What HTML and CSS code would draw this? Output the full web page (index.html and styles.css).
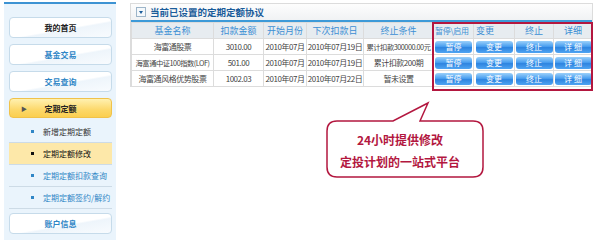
FILE: index.html
```html
<!DOCTYPE html>
<html lang="zh-CN">
<head>
    <meta charset="UTF-8">
    <title>定期定额修改</title>
    <link rel="stylesheet" href="styles.css">
</head>
<body>

    <!-- Menu lateral -->
    <div class="lateral">
        <div class="menu-botao preto">我的首页</div>
        <div class="menu-botao">基金交易</div>
        <div class="menu-botao">交易查询</div>
        <div class="menu-botao ativo"><span class="seta">&#9654;</span>定期定额</div>
        <ul class="submenu">
            <li class="cinza">新增定期定额</li>
            <li class="atual">定期定额修改</li>
            <li>定期定额扣款查询</li>
            <li>定期定额签约/解约</li>
        </ul>
        <div class="menu-botao">账户信息</div>
    </div>

    <!-- Conteúdo principal -->
    <div class="principal">
        <div class="painel">
            <div class="painel-titulo"><span class="icone-seta"></span>当前已设置的定期定额协议</div>
            <div class="tabela-area">
                <table class="tabela">
                    <colgroup>
                        <col style="width:82px"><col style="width:50px"><col style="width:43px">
                        <col style="width:57px"><col style="width:70px"><col style="width:40px">
                        <col style="width:41px"><col style="width:39px"><col style="width:39px">
                    </colgroup>
                    <tr>
                        <th>基金名称</th><th>扣款金额</th><th>开始月份</th><th>下次扣款日</th><th>终止条件</th>
                        <th class="esq apertado">暂停\启用</th><th class="esq">变更</th><th>终止</th><th>详细</th>
                    </tr>
                    <tr>
                        <td>海富通股票</td><td>3010.00</td><td>2010年07月</td><td>2010年07月19日</td><td class="longo">累计扣款300000.00元</td>
                        <td><span class="btn">暂停</span></td><td><span class="btn">变更</span></td><td><span class="btn">终止</span></td><td><span class="btn">详 细</span></td>
                    </tr>
                    <tr>
                        <td class="longo">海富通中证100指数(LOF)</td><td>501.00</td><td>2010年07月</td><td>2010年07月19日</td><td>累计扣款200期</td>
                        <td><span class="btn">暂停</span></td><td><span class="btn">变更</span></td><td><span class="btn">终止</span></td><td><span class="btn">详 细</span></td>
                    </tr>
                    <tr>
                        <td>海富通风格优势股票</td><td>1002.03</td><td>2010年07月</td><td>2010年07月22日</td><td>暂未设置</td>
                        <td><span class="btn">暂停</span></td><td><span class="btn">变更</span></td><td><span class="btn">终止</span></td><td><span class="btn">详 细</span></td>
                    </tr>
                </table>
                <div class="destaque"></div>
            </div>
        </div>

        <!-- Balão -->
        <div class="balao">
            <svg class="balao-forma" width="170" height="85" viewBox="0 0 170 85">
                <path d="M17 23 H73 L108 5 L100 23 H153 Q163 23 163 33 V69 Q163 79 153 79 H17 Q7 79 7 69 V33 Q7 23 17 23 Z" fill="#fff" stroke="#b3173f" stroke-width="1.5"/>
            </svg>
            <p>24小时提供修改</p>
            <p>定投计划的一站式平台</p>
        </div>
    </div>

</body>
</html>
```

FILE: styles.css
```css
* { margin: 0; padding: 0; box-sizing: border-box; font-family: "Noto Sans CJK SC", "Liberation Sans", sans-serif; }
body { background: #fff; display: flex; width: 600px; height: 240px; overflow: hidden; }

.lateral { margin: 2px 0 0 4px; width: 112px; height: 238px; background: #eaf4fc; border-top: 2px solid #3d93d3; padding: 13px 4px 0 5px; }
.menu-botao { position: relative; height: 21px; margin-bottom: 6px; border: 1px solid #c6dbea; border-radius: 4px; background: linear-gradient(170deg, #fff 0%, #fff 55%, #eef5fb 60%, #f8fbfe 100%); color: #2f86c6; font-size: 8px; font-weight: bold; display: flex; align-items: center; justify-content: center; }
.menu-botao.preto { color: #222; }
.menu-botao.ativo { height: 20px; margin-bottom: 0; border-color: #f0c24a; background: linear-gradient(#fff1b0, #fcd86a 60%, #fbcf50); color: #222; }
.seta { position: absolute; left: 11px; top: 5px; font-size: 6px; color: #555; }
.submenu { list-style: none; padding-top: 3px; margin-bottom: 4px; }
.submenu li { height: 22px; border-bottom: 1px solid #cddbe6; font-size: 8px; color: #2f86c6; display: flex; align-items: center; padding-left: 22px; }
.submenu li::before { content: ""; width: 3px; height: 3px; background: #2f86c6; margin-right: 9px; }
.submenu li.cinza { color: #333; }
.submenu li.atual { background: #fde8a9; color: #111; }
.submenu li.atual::before { background: #111; }

.principal { position: relative; flex: 1; padding: 3px 0 0 14px; }
.painel { width: 463px; border: 1px solid #dcdcdc; border-bottom: none; }
.painel-titulo { height: 18px; background: linear-gradient(#fdfdfd, #f0f2f4); border-bottom: 2px solid #3d9ad8; font-size: 9.5px; font-weight: bold; color: #1a5c9a; display: flex; align-items: center; padding-left: 5px; }
.icone-seta { width: 10px; height: 10px; border: 1px solid #9db5c9; background: #f4f8fb; margin-right: 4px; position: relative; }
.icone-seta::after { content: ""; position: absolute; left: 2px; top: 3px; border: 2px solid transparent; border-top: 3px solid #1a5c9a; }

.tabela-area { position: relative; }
.tabela { width: 461px; border-collapse: collapse; table-layout: fixed; }
.tabela th { height: 16px; background: #e7ecf0; color: #3c8fd4; font-size: 9px; font-weight: normal; border: 1px solid #dcdcdc; white-space: nowrap; overflow: hidden; }
.tabela th.esq { text-align: left; padding-left: 2px; }
.tabela th.apertado { font-size: 8px; letter-spacing: -0.3px; padding-left: 1px; }
.tabela td { height: 16px; font-size: 8px; letter-spacing: -0.45px; color: #444; text-align: center; border: 1px solid #dcdcdc; white-space: nowrap; overflow: hidden; padding: 0; }
.tabela td.longo { font-size: 7.3px; letter-spacing: -0.5px; }
.btn { display: inline-block; width: 37px; height: 12px; line-height: 12px; border-radius: 3px; background: linear-gradient(#9bd0fa, #4a9ff0 45%, #2e84e0 55%, #4fa4f2); color: #fff; font-size: 8px; letter-spacing: 0; vertical-align: middle; }

.destaque { position: absolute; left: 301px; top: 0; width: 161px; height: 69px; border: 2px solid #b3173f; }

.balao { position: absolute; left: 204px; top: 98px; width: 170px; height: 85px; padding: 31px 10px 0 0; text-align: center; }
.balao-forma { position: absolute; left: 0; top: 0; }
.balao p { position: relative; font-size: 12px; font-weight: bold; color: #b3173f; line-height: 22px; }
```
